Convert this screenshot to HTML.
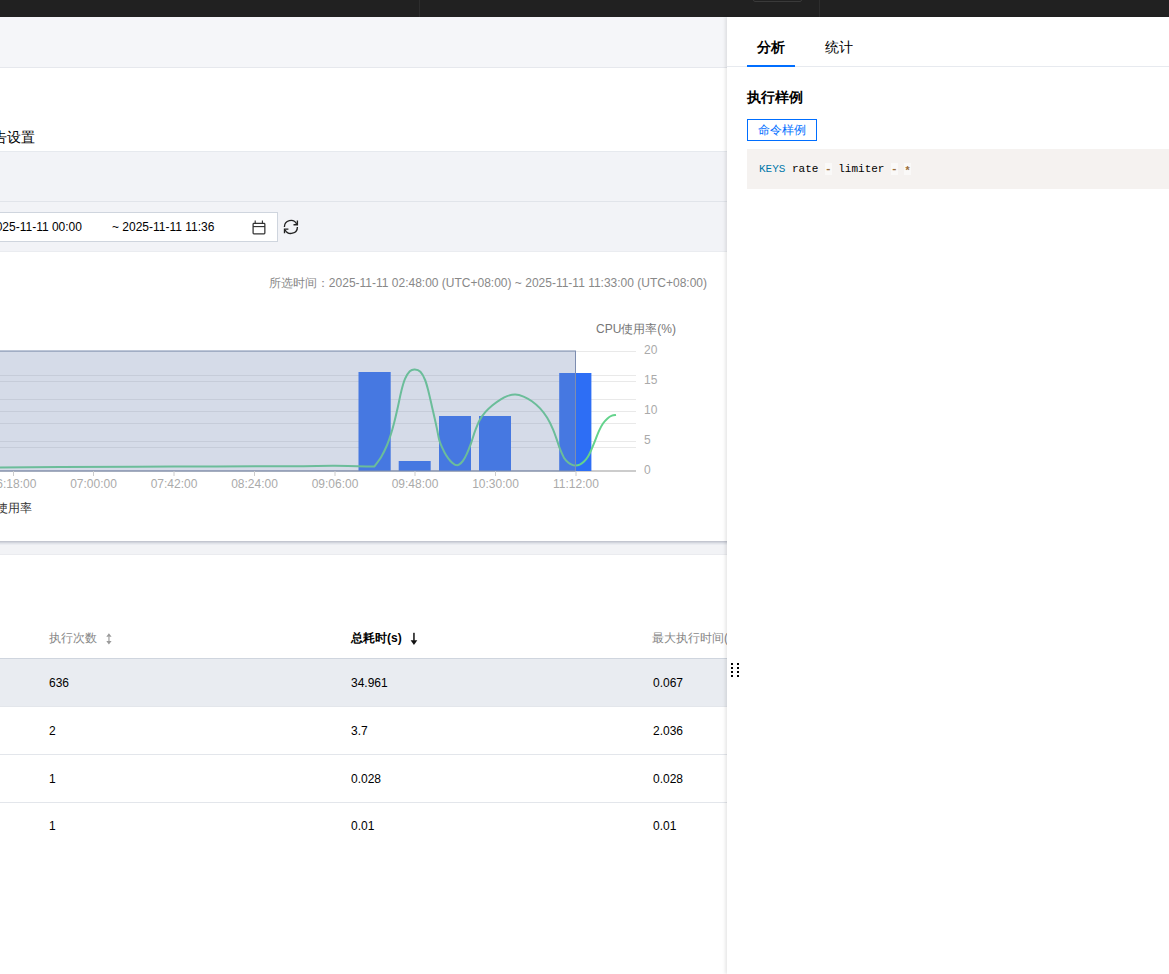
<!DOCTYPE html>
<html><head><meta charset="utf-8">
<style>
*{margin:0;padding:0;box-sizing:border-box}
html,body{width:1169px;height:974px;overflow:hidden;background:#fff;font-family:"Liberation Sans",sans-serif;color:#000}
.abs{position:absolute}
#topbar{left:0;top:0;width:1169px;height:17px;background:#212121}
#hdr{left:0;top:17px;width:727px;height:51px;background:#f5f6f9;border-bottom:1px solid #e6e8ed}
#sec1{left:0;top:68px;width:727px;height:83px;background:#fff}
#sec2{left:0;top:151px;width:727px;height:101px;background:#f2f3f7;border-top:1px solid #e6e9ee;border-bottom:1px solid #eaecf0}
#sec2 .line{left:0;top:49px;width:727px;height:1px;background:#e1e4ea}
#picker{left:-10px;top:212px;width:288px;height:30px;background:#fff;border:1px solid #cfd5de}
#card{left:0;top:252px;width:727px;height:289px;background:#fff}
#gap{left:0;top:541px;width:727px;height:14px;background:#f2f3f6;border-bottom:1px solid #eaebef}
#tbl{left:0;top:555px;width:727px;height:419px;background:#fff}
#panel{left:727px;top:17px;width:442px;height:957px;background:#fff;box-shadow:-2px 0 3px rgba(0,0,0,.09)}
.t12{font-size:12px;line-height:12px;white-space:nowrap}
.op{color:#9a6e3a;background:rgba(255,255,255,.5);font-weight:bold}
.t14{font-size:14px;line-height:14px;white-space:nowrap}
</style></head><body>
<div id="topbar" class="abs">
  <div class="abs" style="left:419px;top:0;width:1px;height:17px;background:#2d2d2d"></div>
  <div class="abs" style="left:819px;top:0;width:1px;height:17px;background:#2d2d2d"></div>
  <div class="abs" style="left:753px;top:-10px;width:49px;height:12px;border:1px solid #3a3a3a;border-radius:2px"></div>
</div>
<div id="hdr" class="abs"></div>
<div id="sec1" class="abs">
  <div class="abs t14" style="left:-7px;top:62px;color:#000">告设置</div>
</div>
<div id="sec2" class="abs"><div class="abs line"></div></div>
<div id="picker" class="abs">
  <div class="abs t12" style="left:-2px;top:8px;color:#000">2025-11-11 00:00</div>
  <div class="abs t12" style="left:121px;top:8px;color:#000">~ 2025-11-11 11:36</div>
  <svg class="abs" style="left:257px;top:-2px" width="30" height="30" viewBox="248 211 30 30">
    <rect x="253.1" y="223.35" width="11.75" height="10.5" rx="0.8" fill="none" stroke="#333" stroke-width="1.25"/>
    <line x1="253.1" y1="226.6" x2="264.85" y2="226.6" stroke="#2a2a2a" stroke-width="1.1"/>
    <line x1="255.2" y1="220.5" x2="255.2" y2="223.4" stroke="#2a2a2a" stroke-width="1.1"/>
    <line x1="262.4" y1="220.5" x2="262.4" y2="223.4" stroke="#2a2a2a" stroke-width="1.1"/>
  </svg>
</div>
<svg class="abs" style="left:280px;top:216px" width="22" height="22" viewBox="280 216 22 22">
  <g fill="none" stroke="#222" stroke-width="1.35">
  <path d="M284.4 226.9 A6.5 6.5 0 0 1 296.64 223.85"/>
  <path d="M297.4 226.9 A6.5 6.5 0 0 1 285.16 229.95"/>
  <path d="M297.4 220.6 L297.4 224.7 L293.5 224.7"/>
  <path d="M284.5 233.2 L284.5 229.1 L288.4 229.1"/>
  </g>
</svg>
<div id="card" class="abs">
  <div class="abs t12" style="right:20px;top:25px;color:#888">所选时间：2025-11-11 02:48:00 (UTC+08:00) ~ 2025-11-11 11:33:00 (UTC+08:00)</div>
</div>
<svg class="abs" style="left:0;top:251px" width="727" height="290" viewBox="0 251 727 290">
    <g stroke="#e9e9e9" stroke-width="1">
    <line x1="0" y1="351.5" x2="636" y2="351.5"/>
    <line x1="0" y1="381.5" x2="636" y2="381.5"/>
    <line x1="0" y1="411.5" x2="636" y2="411.5"/>
    <line x1="0" y1="441.5" x2="636" y2="441.5"/>
    <line x1="0" y1="375.5" x2="636" y2="375.5"/>
    <line x1="0" y1="399.5" x2="636" y2="399.5"/>
    <line x1="0" y1="423.5" x2="636" y2="423.5"/>
    <line x1="0" y1="447.5" x2="636" y2="447.5"/>
  </g>
  <line x1="0" y1="471" x2="636" y2="471" stroke="#ccc" stroke-width="2"/>
  <g fill="#2d6ef5">
    <rect x="358.5" y="372" width="32.2" height="99"/>
    <rect x="398.7" y="461" width="32" height="10"/>
    <rect x="439" y="416" width="32" height="55"/>
    <rect x="479" y="416" width="32" height="55"/>
    <rect x="559.2" y="373" width="32.2" height="98"/>
  </g>
  <path d="M-5.0 467.4 C5.83 467.35 30.17 467.23 60.0 467.1 C89.83 466.97 135.67 466.75 174.0 466.6 C212.33 466.45 263.17 466.33 290.0 466.2 C316.83 466.07 320.97 465.73 335.0 465.8 C349.03 465.87 367.67 466.47 374.2 466.6 C375.37 464.98 379.05 460.50 381.2 456.9 C383.35 453.30 385.48 448.77 387.1 445.0 C388.72 441.23 389.72 438.05 390.9 434.3 C392.08 430.55 393.05 427.02 394.2 422.5 C395.35 417.98 396.60 412.50 397.8 407.2 C399.00 401.90 400.20 395.42 401.4 390.7 C402.60 385.98 403.60 382.15 405.0 378.9 C406.40 375.65 408.17 372.78 409.8 371.2 C411.43 369.62 413.03 369.30 414.8 369.4 C416.57 369.50 418.68 370.03 420.4 371.8 C422.12 373.57 423.73 376.65 425.1 380.0 C426.47 383.35 427.43 387.37 428.6 391.9 C429.77 396.43 430.93 402.10 432.1 407.2 C433.27 412.30 434.75 418.70 435.6 422.5 C436.45 426.30 436.58 427.03 437.2 430.0 C437.82 432.97 438.47 437.37 439.3 440.3 C440.13 443.23 441.03 445.05 442.2 447.6 C443.37 450.15 444.93 453.37 446.3 455.6 C447.67 457.83 449.03 459.52 450.4 461.0 C451.77 462.48 453.55 463.82 454.5 464.5 C455.45 465.18 455.35 465.07 456.1 465.1 C456.85 465.13 457.90 465.35 459.0 464.7 C460.10 464.05 461.40 463.02 462.7 461.2 C464.00 459.38 465.43 456.73 466.8 453.8 C468.17 450.87 469.53 447.37 470.9 443.6 C472.27 439.83 473.55 435.10 475.0 431.2 C476.45 427.30 477.85 423.42 479.6 420.2 C481.35 416.98 483.35 414.40 485.5 411.9 C487.65 409.40 489.95 407.30 492.5 405.2 C495.05 403.10 498.37 400.82 500.8 399.3 C503.23 397.78 504.68 396.90 507.1 396.1 C509.52 395.30 512.55 394.42 515.3 394.5 C518.05 394.58 520.83 395.47 523.6 396.6 C526.37 397.73 529.15 399.33 531.9 401.3 C534.65 403.27 537.55 405.65 540.1 408.4 C542.65 411.15 545.03 414.27 547.2 417.8 C549.37 421.33 551.33 425.47 553.1 429.6 C554.87 433.73 556.65 439.38 557.8 442.6 C558.95 445.82 558.95 446.35 560.0 448.9 C561.05 451.45 562.73 455.65 564.1 457.9 C565.47 460.15 566.83 461.23 568.2 462.4 C569.57 463.57 571.07 464.38 572.3 464.9 C573.53 465.42 574.37 465.53 575.6 465.5 C576.83 465.47 578.33 465.32 579.7 464.7 C581.07 464.08 582.43 463.13 583.8 461.8 C585.17 460.47 586.67 458.65 587.9 456.7 C589.13 454.75 590.03 452.70 591.2 450.1 C592.37 447.50 593.60 444.32 594.9 441.1 C596.20 437.88 597.65 433.73 599.0 430.8 C600.35 427.87 601.58 425.57 603.0 423.5 C604.42 421.43 606.02 419.72 607.5 418.4 C608.98 417.08 610.48 416.18 611.9 415.6 C613.32 415.02 615.32 415.02 616.0 414.9" fill="none" stroke="#64d38c" stroke-width="2"/>
  <rect x="-10" y="351" width="585.5" height="120" fill="rgba(123,142,182,0.32)" stroke="#7d8db0" stroke-width="1"/>
  <g stroke="#ccc" stroke-width="1">
    <line x1="13.5" y1="471" x2="13.5" y2="476"/>
    <line x1="93.5" y1="471" x2="93.5" y2="476"/>
    <line x1="174" y1="471" x2="174" y2="476"/>
    <line x1="254.5" y1="471" x2="254.5" y2="476"/>
    <line x1="335" y1="471" x2="335" y2="476"/>
    <line x1="415" y1="471" x2="415" y2="476"/>
    <line x1="495.5" y1="471" x2="495.5" y2="476"/>
    <line x1="576" y1="471" x2="576" y2="476"/>
  </g>
  <g font-family="Liberation Sans, sans-serif" font-size="12" fill="#aaa" text-anchor="middle">
    <text x="13" y="488">06:18:00</text>
    <text x="93.5" y="488">07:00:00</text>
    <text x="174" y="488">07:42:00</text>
    <text x="254.5" y="488">08:24:00</text>
    <text x="335" y="488">09:06:00</text>
    <text x="415" y="488">09:48:00</text>
    <text x="495.5" y="488">10:30:00</text>
    <text x="576" y="488">11:12:00</text>
  </g>
  <g font-family="Liberation Sans, sans-serif" font-size="12" fill="#aaa">
    <text x="644" y="354">20</text>
    <text x="644" y="384">15</text>
    <text x="644" y="414">10</text>
    <text x="644" y="444">5</text>
    <text x="644" y="474">0</text>
  </g>
  <text x="596" y="333" font-family="Liberation Sans, sans-serif" font-size="12" fill="#777">CPU使用率(%)</text>
  <text x="-4.4" y="512" font-family="Liberation Sans, sans-serif" font-size="12" fill="#333">使用率</text>
</svg>
<div id="gap" class="abs" style="background:linear-gradient(#c3c6d0 0px,#c3c6d0 1px,#d2d5dd 1px,#d2d5dd 2px,#e1e3e9 2px,#e1e3e9 3px,#eaecf1 3px,#eaecf1 4px,#f2f3f6 4px)"></div>
<div id="tbl" class="abs">
  <div class="abs t12" style="left:49px;top:77px;color:#888">执行次数</div>
  <svg class="abs" style="left:100px;top:73px" width="20" height="20" viewBox="100 628 20 20"><path d="M108.9 633.3 L111.6 636.7 L106.3 636.7 Z M106.3 641 L111.6 641 L108.9 644.4 Z" fill="#9a9a9a"/><rect x="108.3" y="636.5" width="1.3" height="4.6" fill="#a8a8a8"/></svg>
  <div class="abs t12" style="left:351px;top:77px;color:#000;font-weight:bold">总耗时(s)</div>
  <svg class="abs" style="left:405px;top:73px" width="20" height="20" viewBox="405 628 20 20"><rect x="413.2" y="632.8" width="1.5" height="8" fill="#111"/><path d="M410.6 640.3 L417.3 640.3 L413.95 645 Z" fill="#111"/></svg>
  <div class="abs t12" style="left:652px;top:77px;color:#888">最大执行时间(</div>
  <div class="abs" style="left:0;top:103px;width:727px;height:1px;background:#cfd5de"></div>
  <div class="abs" style="left:0;top:104px;width:727px;height:47px;background:#e9ecf1"></div>
  <div class="abs" style="left:0;top:151px;width:727px;height:1px;background:#e3e6eb"></div>
  <div class="abs" style="left:0;top:199px;width:727px;height:1px;background:#e3e6eb"></div>
  <div class="abs" style="left:0;top:247px;width:727px;height:1px;background:#e3e6eb"></div>
  <div class="abs t12" style="left:49px;top:122px">636</div>
  <div class="abs t12" style="left:351px;top:122px">34.961</div>
  <div class="abs t12" style="left:653px;top:122px">0.067</div>
  <div class="abs t12" style="left:49px;top:170px">2</div>
  <div class="abs t12" style="left:351px;top:170px">3.7</div>
  <div class="abs t12" style="left:653px;top:170px">2.036</div>
  <div class="abs t12" style="left:49px;top:218px">1</div>
  <div class="abs t12" style="left:351px;top:218px">0.028</div>
  <div class="abs t12" style="left:653px;top:218px">0.028</div>
  <div class="abs t12" style="left:49px;top:265px">1</div>
  <div class="abs t12" style="left:351px;top:265px">0.01</div>
  <div class="abs t12" style="left:653px;top:265px">0.01</div>
</div>
<div id="panel" class="abs">
  <div class="abs" style="left:0;top:49px;width:442px;height:1px;background:#e7eaef"></div>
  <div class="abs t14" style="left:30px;top:23px;font-weight:bold;color:#000">分析</div>
  <div class="abs t14" style="left:98px;top:23px;color:#000">统计</div>
  <div class="abs" style="left:20px;top:48px;width:48px;height:2px;background:#006eff"></div>
  <div class="abs t14" style="left:20px;top:72.5px;font-weight:bold">执行样例</div>
  <div class="abs t12" style="left:20px;top:102px;width:70px;height:22px;border:1px solid #006eff;color:#006eff;text-align:center;line-height:20px">命令样例</div>
  <div class="abs" style="left:20px;top:132px;width:422px;height:40px;background:#f5f2f0;font-family:'Liberation Mono',monospace;font-size:11px;line-height:40px;padding-left:12px;white-space:pre"><span style="color:#07a">KEYS</span> rate <span class="op">-</span> limiter <span class="op">-</span> <span class="op"><span style="position:relative;top:1.5px">*</span></span></div>
</div>
<svg class="abs" style="left:730px;top:662px" width="10" height="16">
  <g fill="#000"><rect x="1" y="1" width="2" height="2"/><rect x="7" y="1" width="2" height="2"/>
  <rect x="1" y="5" width="2" height="2"/><rect x="7" y="5" width="2" height="2"/>
  <rect x="1" y="9" width="2" height="2"/><rect x="7" y="9" width="2" height="2"/>
  <rect x="1" y="13" width="2" height="2"/><rect x="7" y="13" width="2" height="2"/></g>
</svg>
</body></html>
